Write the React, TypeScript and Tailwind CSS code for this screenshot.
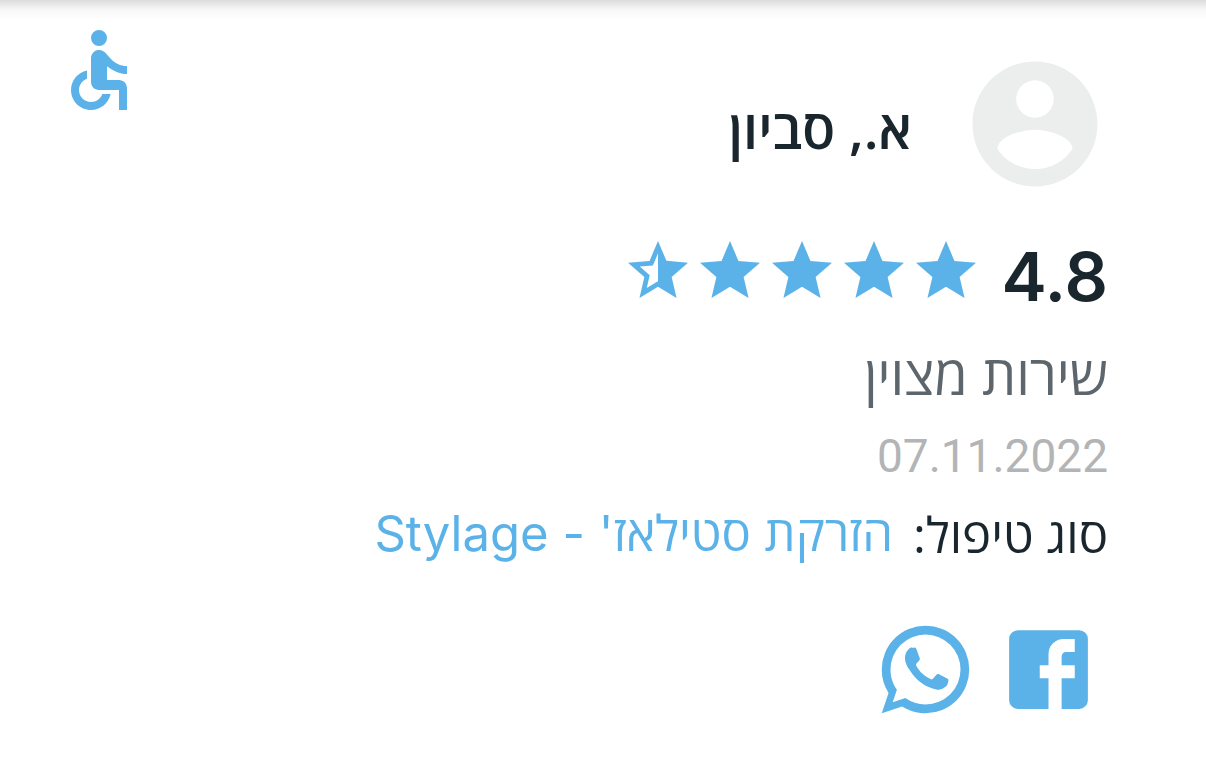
import React from 'react';

const review = {
  author: 'א., סביון',
  rating: 4.8,
  text: 'שירות מצוין',
  date: '07.11.2022',
  treatment: "הזרקת סטילאז' - Stylage",
};

const paths = {
  accessible:
    'M12 2a2 2 0 1 0 0 4 2 2 0 0 0 0-4zM19 13v-2c-1.54.02-3.09-.75-4.07-1.83l-1.29-1.43c-.17-.19-.38-.34-.61-.45-.01 0-.01-.01-.02-.01H13c-.35-.2-.75-.3-1.19-.26C10.76 7.11 10 8.04 10 9.09V15c0 1.1.9 2 2 2h5v5h2v-5.5c0-1.1-.9-2-2-2h-3v-3.45c1.29 1.07 3.25 1.94 5 1.95zm-6.17 5c-.41 1.16-1.52 2-2.83 2-1.66 0-3-1.34-3-3 0-1.31.84-2.41 2-2.83V12.1c-2.28.46-4 2.48-4 4.9 0 2.76 2.24 5 5 5 2.42 0 4.44-1.72 4.9-4h-2.07z',
  account:
    'M12 2C6.48 2 2 6.48 2 12s4.48 10 10 10 10-4.48 10-10S17.52 2 12 2zm0 3c1.66 0 3 1.34 3 3s-1.34 3-3 3-3-1.34-3-3 1.34-3 3-3zm0 14.2c-2.5 0-4.71-1.28-6-3.22.03-1.99 4-3.08 6-3.08 1.99 0 5.97 1.09 6 3.08-1.29 1.94-3.5 3.22-6 3.22z',
  star: 'M12 17.27 18.18 21l-1.64-7.03L22 9.24l-7.19-.61L12 2 9.19 8.63 2 9.24l5.46 4.73L5.82 21z',
  starHalf:
    'm22 9.24-7.19-.62L12 2 9.19 8.63 2 9.24l5.46 4.73L5.82 21 12 17.27 18.18 21l-1.63-7.03L22 9.24zM12 15.4l-3.76 2.27 1-4.28-3.32-2.88 4.38-.38L12 6.1v9.3z',
  facebook:
    'M5 3h14a2 2 0 0 1 2 2v14a2 2 0 0 1-2 2h-4v-7h3v-3h-3V9a1 1 0 0 1 1-1h2V5h-2.5A3.5 3.5 0 0 0 12 8.5V11h-2v3h2v7H5a2 2 0 0 1-2-2V5a2 2 0 0 1 2-2z',
  whatsapp:
    'M16.75 13.96c.25.13.41.2.46.3.06.11.04.61-.21 1.18-.2.56-1.24 1.1-1.7 1.12-.46.02-.47.36-2.96-.73-2.49-1.09-3.99-3.75-4.11-3.92-.12-.17-.96-1.38-.92-2.61.05-1.22.69-1.8.95-2.04.24-.26.51-.29.68-.26h.47c.15 0 .36-.06.55.45l.69 1.87c.06.13.1.28.01.44l-.27.41-.39.42c-.12.12-.26.25-.12.5.12.26.62 1.09 1.32 1.78.91.88 1.71 1.17 1.95 1.3.24.14.39.12.54-.04l.81-.94c.19-.25.35-.19.58-.11l1.67.88M12 2a10 10 0 0 1 10 10 10 10 0 0 1-10 10c-1.97 0-3.8-.57-5.35-1.55L2 22l1.55-4.65A9.969 9.969 0 0 1 2 12 10 10 0 0 1 12 2m0 2a8 8 0 0 0-8 8c0 1.72.54 3.31 1.46 4.61L4.5 19.5l2.89-.96A7.95 7.95 0 0 0 12 20a8 8 0 0 0 8-8 8 8 0 0 0-8-8z',
};

const Icon: React.FC<{ name: keyof typeof paths; className: string }> = ({ name, className }) => (
  <svg viewBox="0 0 24 24" fill="currentColor" aria-hidden="true" className={className}>
    <path d={paths[name]} />
  </svg>
);

const Stars: React.FC<{ value: number }> = ({ value }) => (
  <div className="flex text-[#5ab2e8]">
    {[1, 2, 3, 4, 5].map((n) => (
      <Icon key={n} name={value >= n ? 'star' : 'starHalf'} className="size-[72px]" />
    ))}
  </div>
);

const App: React.FC = () => {
  return (
    <main
      dir="rtl"
      lang="he"
      className="bg-white font-['Open_Sans','Liberation_Sans',sans-serif] text-[#19262d]"
    >
      <div className="h-5 bg-linear-to-b from-[#dcdcdc] via-[#f8f8f8] to-white" />
      <article className="pr-[98px] pl-[51px]">
        <header className="flex items-start justify-between">
          <div className="-mr-0.5 flex items-center pt-[29px]">
            <Icon name="account" className="size-[150px] text-[#eceeee]" />
            <h1 className="mr-12 pt-2 text-[54px] leading-[64px] font-semibold">{review.author}</h1>
          </div>
          <Icon name="accessible" className="mt-0.5 size-24 text-[#5ab2e8]" />
        </header>

        <div className="mt-9 flex items-start gap-5">
          <span className="pt-0.5 font-['Inter',sans-serif] text-[68px] leading-[78px] font-semibold">
            {review.rating}
          </span>
          <Stars value={review.rating} />
        </div>

        <p className="mt-5 text-[54px] leading-[78px] font-medium text-[#5d666c]">{review.text}</p>
        <p className="mt-1 font-['Roboto',sans-serif] text-[46px] leading-[78px] text-[#b2b4b5]">
          {review.date}
        </p>
        <p className="flex gap-5 text-[49px] leading-[78px]">
          <span>סוג טיפול:</span>
          <a href="#stylage" className="font-['Inter','Open_Sans',sans-serif] text-[#5ab2e8]">
            {review.treatment}
          </a>
        </p>

        <div className="mt-11 flex gap-[18px] pr-[7px] text-[#5ab2e8]">
          <a href="#facebook" aria-label="Facebook">
            <Icon name="facebook" className="size-[105px]" />
          </a>
          <a href="#whatsapp" aria-label="WhatsApp">
            <Icon name="whatsapp" className="size-[105px]" />
          </a>
        </div>
      </article>
    </main>
  );
};

export default App;
